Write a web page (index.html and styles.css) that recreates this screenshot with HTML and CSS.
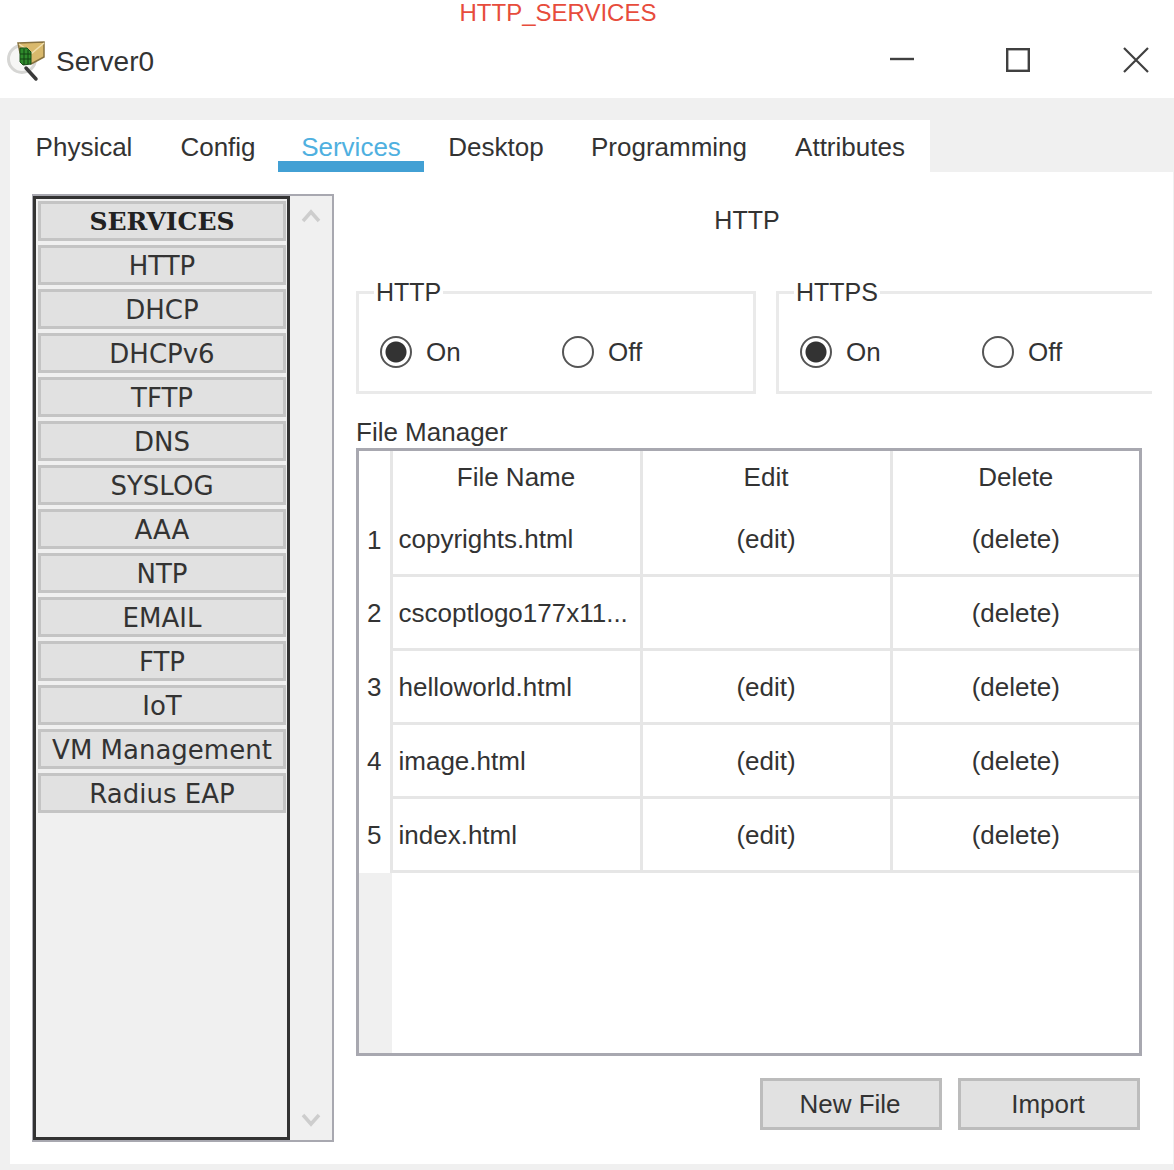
FILE: index.html
```html
<!DOCTYPE html>
<html lang="en">
<head>
    <meta charset="UTF-8">
    <meta name="viewport" content="width=device-width, initial-scale=1.0">
    <title>HTTP_SERVICES</title>
    <link rel="stylesheet" href="styles.css">
</head>
<body>

    <div class="caption">HTTP_SERVICES</div>

    <div class="titlebar">
        <svg class="app-icon" width="44" height="44" viewBox="0 0 44 44">
            <circle cx="16" cy="20" r="13.5" fill="#f6f6f5" stroke="#d6d6d4" stroke-width="3"/>
            <path d="M20 29 L30 40" stroke="#3a3a3a" stroke-width="3.5" stroke-linecap="round"/>
            <path d="M12 4 L38 3 L38 18 L25 25 L14 14 Z" fill="#d9b96c" stroke="#86713f" stroke-width="1.5"/>
            <path d="M13 5 L26 14 L38 4" fill="none" stroke="#f0dfae" stroke-width="1.5"/>
            <path d="M14 9 L21 9 L25 13 L25 25 L17 26 L14 23 Z" fill="#2f8a2c" stroke="#174f18" stroke-width="1"/>
            <path d="M18 10 V26 M22 11 V25 M14 15 H25 M14 20 H25" stroke="#134013" stroke-width="1"/>
        </svg>
        <span class="app-name">Server0</span>
        <div class="win-controls">
            <svg width="24" height="24" viewBox="0 0 24 24"><path d="M0 11 H24" stroke="#404040" stroke-width="2.4"/></svg>
            <svg width="24" height="24" viewBox="0 0 24 24"><rect x="1.2" y="1.2" width="21.6" height="21.6" fill="none" stroke="#404040" stroke-width="2.4"/></svg>
            <svg class="win-close" width="26" height="26" viewBox="0 0 26 26"><path d="M1 1 L25 25 M25 1 L1 25" stroke="#404040" stroke-width="2.2"/></svg>
        </div>
    </div>

    <div class="window">
        <div class="tabs">
            <div class="tab">Physical</div>
            <div class="tab">Config</div>
            <div class="tab active">Services</div>
            <div class="tab">Desktop</div>
            <div class="tab">Programming</div>
            <div class="tab">Attributes</div>
        </div>

        <div class="content">
            <div class="sidebar">
                <div class="service-list">
                    <button class="service-btn service-head">SERVICES</button>
                    <button class="service-btn">HTTP</button>
                    <button class="service-btn">DHCP</button>
                    <button class="service-btn">DHCPv6</button>
                    <button class="service-btn">TFTP</button>
                    <button class="service-btn">DNS</button>
                    <button class="service-btn">SYSLOG</button>
                    <button class="service-btn">AAA</button>
                    <button class="service-btn">NTP</button>
                    <button class="service-btn">EMAIL</button>
                    <button class="service-btn">FTP</button>
                    <button class="service-btn">IoT</button>
                    <button class="service-btn">VM Management</button>
                    <button class="service-btn">Radius EAP</button>
                </div>
                <div class="scroller">
                    <svg width="20" height="14" viewBox="0 0 20 14"><path d="M2 12 L10 3 L18 12" fill="none" stroke="#cdcdcd" stroke-width="3.5"/></svg>
                    <svg width="20" height="14" viewBox="0 0 20 14"><path d="M2 2 L10 11 L18 2" fill="none" stroke="#cdcdcd" stroke-width="3.5"/></svg>
                </div>
            </div>

            <div class="main">
                <div class="main-title">HTTP</div>

                <div class="toggles">
                    <fieldset class="toggle-box">
                        <legend>HTTP</legend>
                        <div class="radio-row">
                            <span class="radio checked"></span><span class="radio-label">On</span>
                        </div>
                        <div class="radio-row">
                            <span class="radio"></span><span class="radio-label">Off</span>
                        </div>
                    </fieldset>
                    <fieldset class="toggle-box toggle-clip">
                        <legend>HTTPS</legend>
                        <div class="radio-row">
                            <span class="radio checked"></span><span class="radio-label">On</span>
                        </div>
                        <div class="radio-row">
                            <span class="radio"></span><span class="radio-label">Off</span>
                        </div>
                    </fieldset>
                </div>

                <div class="fm-label">File Manager</div>
                <div class="fm-box">
                    <table class="fm-table">
                        <thead>
                            <tr>
                                <th class="num"></th>
                                <th class="name-col">File Name</th>
                                <th class="edit-col">Edit</th>
                                <th class="del-col">Delete</th>
                            </tr>
                        </thead>
                        <tbody>
                            <tr>
                                <td class="num">1</td>
                                <td class="name">copyrights.html</td>
                                <td>(edit)</td>
                                <td>(delete)</td>
                            </tr>
                            <tr>
                                <td class="num">2</td>
                                <td class="name">cscoptlogo177x11...</td>
                                <td></td>
                                <td>(delete)</td>
                            </tr>
                            <tr>
                                <td class="num">3</td>
                                <td class="name">helloworld.html</td>
                                <td>(edit)</td>
                                <td>(delete)</td>
                            </tr>
                            <tr>
                                <td class="num">4</td>
                                <td class="name">image.html</td>
                                <td>(edit)</td>
                                <td>(delete)</td>
                            </tr>
                            <tr>
                                <td class="num">5</td>
                                <td class="name">index.html</td>
                                <td>(edit)</td>
                                <td>(delete)</td>
                            </tr>
                        </tbody>
                    </table>
                    <div class="fm-empty">
                        <div class="fm-gutter"></div>
                    </div>
                </div>

                <div class="actions">
                    <button class="action-btn">New File</button>
                    <button class="action-btn">Import</button>
                </div>
            </div>
        </div>
    </div>

</body>
</html>
```

FILE: styles.css
```css
* {
    box-sizing: border-box;
}

html, body {
    margin: 0;
    padding: 0;
}

body {
    width: 1174px;
    height: 1170px;
    overflow: hidden;
    background: #fff;
    color: #333;
    font-family: "Liberation Sans", Arial, sans-serif;
    font-size: 26px;
}

.caption {
    height: 26px;
    line-height: 26px;
    text-align: center;
    font-size: 24px;
    color: #e74c3c;
    padding-right: 58px;
}

.titlebar {
    height: 72px;
    display: flex;
    align-items: center;
    padding: 0 25px 4px 6px;
}

.app-icon {
    flex: none;
    margin-top: 2px;
}

.app-name {
    margin-left: 6px;
    margin-top: 4px;
    font-size: 28px;
}

.win-controls {
    margin-left: auto;
    display: flex;
    align-items: center;
    gap: 92px;
}

.win-close {
    margin-left: 1px;
}

.window {
    height: 1072px;
    background: #f0f0f0;
    padding: 22px 1px 6px 10px;
    display: flex;
    flex-direction: column;
}

.tabs {
    width: 920px;
    height: 52px;
    display: grid;
    grid-template-columns: 148px 120px 146px 144px 202px 160px;
    grid-template-rows: 52px;
    flex: none;
}

.tab {
    background: #fff;
    line-height: 54px;
    white-space: nowrap;
    text-align: center;
}

.tab.active {
    color: #4fb0e0;
    position: relative;
}

.tab.active::after {
    content: "";
    position: absolute;
    left: 0;
    right: 0;
    bottom: 0;
    height: 11px;
    background: #42a0d4;
}

.content {
    flex: 1;
    background: #fff;
    display: flex;
    gap: 22px;
    padding: 22px 0 22px 22px;
}

.sidebar {
    width: 302px;
    flex: none;
    display: flex;
    border: 2px solid #a8a8b0;
    background: #f0f0f0;
}

.service-list {
    width: 257px;
    flex: none;
    margin-left: -1px;
    border: 3px solid #333;
    display: flex;
    flex-direction: column;
    gap: 4px;
    padding: 2px 1px 2px 2px;
    background: #f0f0f0;
}

.service-btn {
    height: 40px;
    flex: none;
    padding: 1px 0 0;
    background: #e1e1e1;
    border: 3px solid #c4c4c4;
    color: #333;
    font-family: "DejaVu Sans", Verdana, sans-serif;
    font-size: 26px;
    white-space: nowrap;
}

.service-head {
    font-family: "DejaVu Serif", serif;
    font-size: 25px;
    font-weight: bold;
    color: #222;
    padding-top: 0;
}

.scroller {
    flex: 1;
    display: flex;
    flex-direction: column;
    align-items: center;
    justify-content: space-between;
    padding: 13px 0 13px;
}

.main {
    width: 796px;
    flex: none;
    display: flex;
    flex-direction: column;
}

.main-title {
    height: 54px;
    line-height: 52px;
    font-size: 25px;
    text-align: center;
    padding-right: 14px;
}

.toggles {
    display: flex;
    gap: 20px;
    margin-top: 29px;
}

.toggle-box {
    flex: none;
    min-width: 0;
    margin: 0;
    padding: 8px 0 0 21px;
    width: 400px;
    height: 117px;
    border: 3px solid #eaeaea;
    display: flex;
    align-items: center;
}

.toggle-box legend {
    margin-left: -6px;
    padding: 0 2px;
    line-height: 30px;
    font-size: 25px;
}

.toggle-clip {
    width: 376px;
    border-right: none;
}

.radio-row {
    width: 182px;
    flex: none;
    display: flex;
    align-items: center;
    gap: 14px;
    padding-bottom: 2px;
}

.radio {
    width: 32px;
    height: 32px;
    border: 2.5px solid #555;
    border-radius: 50%;
    background: #fff;
    flex: none;
}

.radio.checked {
    background: radial-gradient(circle, #333 0, #333 10px, #fff 11px);
}

.fm-label {
    margin-top: 22px;
    height: 32px;
    line-height: 32px;
}

.fm-box {
    width: 786px;
    height: 608px;
    border: 3px solid #a8a8b0;
    display: flex;
    flex-direction: column;
}

.fm-table {
    width: 780px;
    table-layout: fixed;
    border-collapse: collapse;
    flex: none;
}

.fm-table th {
    height: 59px;
    font-weight: normal;
    border-left: 3px solid #e6e6e6;
    padding: 0 0 7px;
}

.fm-table td {
    height: 74px;
    text-align: center;
    border-left: 3px solid #e6e6e6;
    border-bottom: 3px solid #e6e6e6;
    padding: 2px 0 0;
    white-space: nowrap;
    overflow: hidden;
}

.fm-table tbody tr:first-child td {
    height: 65px;
    padding-bottom: 6px;
}

.fm-table .num {
    width: 32px;
    border-left: none;
    border-bottom: none;
}

.name-col {
    width: 250px;
}

.edit-col {
    width: 250px;
}

.fm-table td.name {
    text-align: left;
    padding-left: 6px;
}

.fm-empty {
    flex: 1;
    display: flex;
}

.fm-gutter {
    width: 33px;
    background: #f0f0f0;
}

.actions {
    display: flex;
    justify-content: flex-end;
    gap: 16px;
    margin-top: 22px;
    padding-right: 12px;
}

.action-btn {
    width: 182px;
    height: 52px;
    padding: 0 2px 0 0;
    background: #e1e1e1;
    border: 3px solid #bcbcbc;
    color: #333;
    font-family: "Liberation Sans", Arial, sans-serif;
    font-size: 26px;
}
```
